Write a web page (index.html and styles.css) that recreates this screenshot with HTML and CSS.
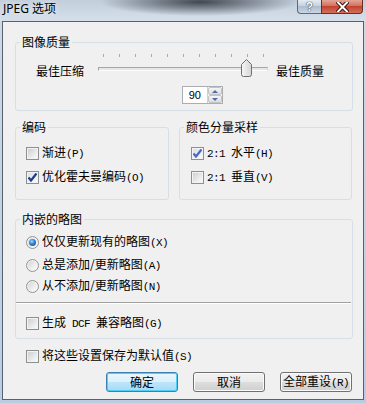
FILE: index.html
```html
<!DOCTYPE html>
<html lang="zh-CN">
  <head>
    <meta charset="utf-8" />
    <title>JPEG 选项</title>
    <link rel="stylesheet" href="styles.css">
  </head>

  <body>
    <div class="window">
      <!-- aero title bar -->
      <div class="titlebar">
        <span class="title">JPEG 选项</span>
        <div class="caption-buttons">
          <span class="cap-btn help">?</span>
          <span class="cap-btn close">
            <svg width="13" height="10" viewBox="0 0 13 10">
              <path d="M2 0.5 L11 9.5 M11 0.5 L2 9.5" stroke="#3a1410" stroke-width="4" stroke-linecap="square" />
              <path d="M2 0.5 L11 9.5 M11 0.5 L2 9.5" stroke="#fff" stroke-width="2" stroke-linecap="square" />
            </svg>
          </span>
        </div>
      </div>

      <div class="client">
        <!-- quality -->
        <fieldset class="group quality">
          <legend>图像质量</legend>
          <div class="slider-row">
            <span class="end-label">最佳压缩</span>
            <div class="slider">
              <div class="ticks">
                <i></i><i></i><i></i><i></i><i></i><i></i><i></i><i></i><i></i><i></i><i></i>
              </div>
              <div class="track"></div>
              <svg class="thumb" width="11" height="18" viewBox="0 0 11 18">
                <defs>
                  <linearGradient id="thumb-fill" x1="0" y1="0" x2="1" y2="0">
                    <stop offset="0" stop-color="#f7f7f7" />
                    <stop offset="1" stop-color="#d4d4d4" />
                  </linearGradient>
                </defs>
                <path d="M0.5 5.5 L5.5 0.5 L10.5 5.5 V15.5 Q10.5 17.5 8.5 17.5 H2.5 Q0.5 17.5 0.5 15.5 Z" fill="url(#thumb-fill)" stroke="#707070" />
              </svg>
            </div>
            <span class="end-label">最佳质量</span>
          </div>
          <div class="spin">
            <span class="spin-value">90</span>
            <span class="spin-buttons">
              <b class="spin-up"></b>
              <b class="spin-down"></b>
            </span>
          </div>
        </fieldset>

        <div class="group-pair">
          <fieldset class="group">
            <legend>编码</legend>
            <div class="option"><span class="check"></span><span>渐进<span class="key">(P)</span></span></div>
            <div class="option second"><span class="check on"></span><span>优化霍夫曼编码<span class="key">(O)</span></span></div>
          </fieldset>
          <fieldset class="group sampling">
            <legend>颜色分量采样</legend>
            <div class="option"><span class="check on light"></span><span><span class="key">2:1 </span>水平<span class="key">(H)</span></span></div>
            <div class="option second"><span class="check"></span><span><span class="key">2:1 </span>垂直<span class="key">(V)</span></span></div>
          </fieldset>
        </div>

        <fieldset class="group thumbs">
          <legend>内嵌的略图</legend>
          <div class="option radio-1"><span class="radio on"></span><span>仅仅更新现有的略图<span class="key">(X)</span></span></div>
          <div class="option radio-2"><span class="radio"></span><span>总是添加/更新略图<span class="key">(A)</span></span></div>
          <div class="option radio-3"><span class="radio"></span><span>从不添加/更新略图<span class="key">(N)</span></span></div>
          <div class="separator"></div>
          <div class="option dcf"><span class="check"></span><span>生成<span class="key"> DCF </span>兼容略图<span class="key">(G)</span></span></div>
        </fieldset>

        <div class="option save-default"><span class="check"></span><span>将这些设置保存为默认值<span class="key">(S)</span></span></div>

        <div class="button-row">
          <button class="btn default">确定</button>
          <button class="btn">取消</button>
          <button class="btn">全部重设<span class="key">(R)</span></button>
        </div>
      </div>
    </div>
  </body>
</html>
```

FILE: styles.css
```css
* {
  box-sizing: border-box;
}

body {
  margin: 0;
  width: 366px;
  height: 403px;
  overflow: hidden;
  font-family: "Noto Sans CJK SC", "Noto Sans", sans-serif;
  font-size: 12px;
  line-height: 16px;
  color: #000;
  background: linear-gradient(to bottom, #cdd9e5, #b9cde2); /* glass frame */
}

.window {
  display: flex;
  flex-direction: column;
  height: 403px;
}

/* ---- title bar ---- */
.titlebar {
  height: 21px;
  display: flex;
  justify-content: space-between;
  align-items: flex-start;
  background:
    radial-gradient(ellipse 100px 14px at 200px 2px, rgba(50, 56, 64, 0.9), rgba(50, 56, 64, 0)),
    linear-gradient(to bottom, #c2cedb, #d5e0eb);
}

.title {
  padding-left: 3px;
  font-family: "Noto Sans", "Noto Sans CJK SC", sans-serif;
  font-size: 12px;
  line-height: 18px;
  text-shadow: 0 0 6px rgba(255, 255, 255, 0.9);
}

.caption-buttons {
  display: flex;
  margin-right: 3px;
}

.cap-btn {
  height: 14px;
  display: flex;
  justify-content: center;
  align-items: center;
  border: 1px solid #5d6a78;
  border-top: none;
}

.help {
  width: 24px;
  border-right: none;
  border-bottom-left-radius: 4px;
  background: linear-gradient(to bottom, #e4ebf2, #c3cfdc 50%, #aebdcd 50%, #c9d6e3);
  color: #fff;
  font-family: "Liberation Sans", sans-serif;
  font-weight: bold;
  font-size: 12px;
  line-height: 12px;
  text-shadow: 0 0 1px #1f2a36, 0 0 1px #1f2a36;
}

.close {
  width: 42px;
  border-color: #6e2c22;
  border-bottom-right-radius: 4px;
  background: linear-gradient(to bottom, #e3a596, #cf6b58 50%, #c2432f 50%, #d3715b);
}

/* ---- client area ---- */
.client {
  flex: 1;
  margin: 0 2px 3px 2px;
  border: 1px solid #56616d;
  background-color: #f0f0f0;
  padding: 12px 10px 0 12px;
}

.group {
  margin: 0;
  padding: 0;
  min-width: 0;
  border: 1px solid #d5dfe5;
  border-radius: 3px;
}

.group legend {
  margin-left: 4px;
  padding: 0 2px;
  line-height: 16px;
}

/* hotkeys and latin bits look like the old bitmap font */
.key {
  font-family: "Liberation Mono", monospace;
  font-size: 11px;
  letter-spacing: -0.6px;
  white-space: pre;
}

/* quality group */
.quality {
  padding-bottom: 6px;
}

.slider-row {
  display: flex;
  margin-top: 3px;
  padding-left: 20px;
}

.end-label {
  margin-top: 10px;
}

.slider {
  position: relative;
  width: 170px;
  height: 25px;
  margin: 0 8px 0 14px;
}

.ticks {
  display: flex;
  justify-content: space-between;
  height: 4px;
  padding: 1px 4px 0 5px;
}

.ticks i {
  width: 1px;
  height: 3px;
  background-color: #a9a9a9;
}

.track {
  margin-top: 10px;
  height: 4px;
  border: 1px solid #a6a6a6;
  border-bottom-color: #fcfcfc;
  border-right-color: #d6d6d6;
  background-color: #e6e6e6;
}

.thumb {
  position: absolute;
  left: 143px;
  top: 6px;
}

.spin {
  display: flex;
  width: 41px;
  height: 18px;
  margin: 7px 0 0 166px;
  border: 1px solid #abadb3;
  background-color: #fff;
}

.spin-value {
  width: 24px;
  padding-right: 6px;
  text-align: right;
  font-family: "Liberation Sans", sans-serif;
  font-size: 11px;
  line-height: 16px;
}

.spin-buttons {
  flex: 1;
  display: flex;
  flex-direction: column;
  border-left: 1px solid #d0d0d0;
}

.spin-buttons b {
  flex: 1;
  display: flex;
  justify-content: center;
  align-items: center;
  border: 1px solid #c4c4c4;
  border-radius: 2px;
  background: linear-gradient(to bottom, #f6f6f6, #dcdcdc);
}

.spin-up::after,
.spin-down::after {
  content: "";
  border-left: 3px solid transparent;
  border-right: 3px solid transparent;
}

.spin-up::after {
  border-bottom: 3px solid #4d6ca8;
}

.spin-down::after {
  border-top: 3px solid #4d6ca8;
}

/* encoding + sampling */
.group-pair {
  display: grid;
  grid-template-columns: 154px 173px;
  column-gap: 10px;
  margin-top: 8px;
}

.group-pair .group {
  padding-bottom: 14px;
}

.option {
  display: flex;
  align-items: center;
  gap: 3px;
  height: 16px;
  margin-top: 10px;
  padding-left: 10px;
  white-space: nowrap;
}

.option.second {
  margin-top: 8px;
}

.sampling .option {
  padding-left: 11px;
}

.check {
  flex: none;
  width: 13px;
  height: 13px;
  border: 1px solid #8e8f8f;
  background: linear-gradient(135deg, #c9cbcf, #f4f5f6 80%);
  box-shadow: inset 0 0 0 1px #f3f3f3;
}

.check.on {
  background-image:
    url("data:image/svg+xml;utf8,<svg xmlns='http://www.w3.org/2000/svg' width='11' height='11'><path d='M1.5 5.5 L4 8.5 L9.5 1.5' fill='none' stroke='%231e3b8c' stroke-width='2.2'/></svg>"),
    linear-gradient(135deg, #d8e0ea, #fbfcfd);
}

.check.light {
  background-image:
    url("data:image/svg+xml;utf8,<svg xmlns='http://www.w3.org/2000/svg' width='11' height='11'><path d='M1.5 5.5 L4 8.5 L9.5 1.5' fill='none' stroke='%234a68bf' stroke-width='2.2'/></svg>"),
    linear-gradient(135deg, #d8dde4, #fbfcfd);
}

.radio {
  flex: none;
  width: 13px;
  height: 13px;
  border: 1px solid #959595;
  border-radius: 50%;
  background: linear-gradient(135deg, #d2d2d2, #fbfbfb 85%);
  box-shadow: inset 0 0 0 1px #f2f2f2;
}

.radio.on::after {
  content: "";
  display: block;
  width: 7px;
  height: 7px;
  margin: 2px;
  border-radius: 50%;
  background: radial-gradient(circle at 40% 35%, #9fdcff, #2f7fd0 45%, #123f7c);
}

/* embedded thumbnails */
.thumbs {
  margin-top: 11px;
  padding-bottom: 7px;
}

.thumbs .radio-1 {
  margin-top: 7px;
}

.thumbs .radio-2 {
  margin-top: 7px;
}

.thumbs .radio-3 {
  margin-top: 5px;
}

.separator {
  height: 2px;
  margin: 8px 1px 0 0;
  border-top: 1px solid #a0a0a0;
  border-bottom: 1px solid #fff;
}

.thumbs .dcf {
  margin-top: 11px;
}

.save-default {
  margin-top: 9px;
  padding-left: 11px;
}

/* dialog buttons */
.button-row {
  display: flex;
  justify-content: flex-end;
  gap: 15px;
  margin-top: 8px;
  padding-right: 1px;
}

.btn {
  width: 72px;
  height: 20px;
  padding: 0;
  border: 1px solid #707070;
  border-radius: 3px;
  background: linear-gradient(to bottom, #f2f2f2, #ebebeb 50%, #dddddd 50%, #cfcfcf);
  box-shadow: inset 0 0 0 1px #fbfbfb;
  font-family: "Noto Sans CJK SC", sans-serif;
  font-size: 12px;
  line-height: 16px;
  color: #000;
}

.btn.default {
  border-color: #3c7fb1;
  background: linear-gradient(to bottom, #eaf6fd, #d9f0fc 50%, #bee6fd 50%, #a7d9f5);
  box-shadow: inset 0 0 0 1px #4cd0f8;
}
```
